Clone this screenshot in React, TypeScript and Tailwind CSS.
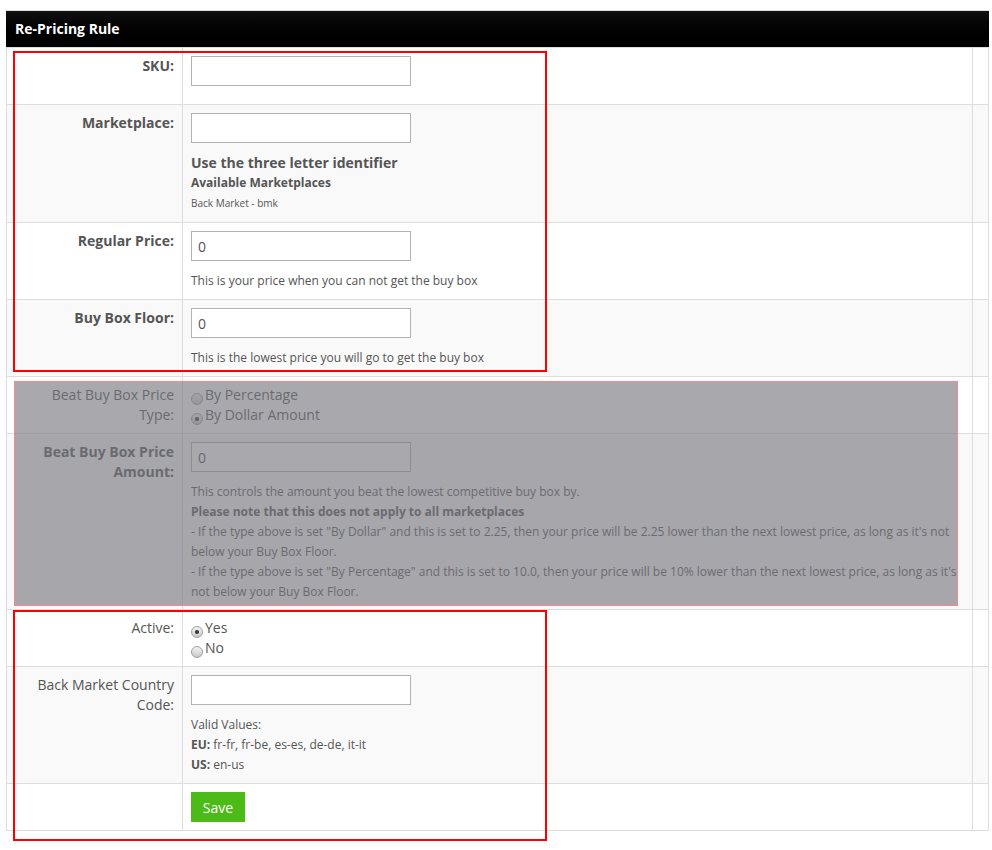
import React from "react";

interface RowProps {
  label?: React.ReactNode;
  strong?: boolean;
  striped?: boolean;
  children?: React.ReactNode;
}

const Row: React.FC<RowProps> = ({ label, strong = false, striped = false, children }) => (
  <div className={`flex border-t border-[#ddd] ${striped ? "bg-[#f9f9f9]" : "bg-white"}`}>
    <div
      className={`w-[176px] shrink-0 border-r border-[#ddd] py-2 pl-2 pr-2 text-right text-[14px] leading-5 text-[#555] ${
        strong ? "font-bold" : ""
      }`}
    >
      {label}
    </div>
    <div className="min-w-0 flex-1 border-r border-[#ddd] px-2 py-2">{children}</div>
    <div className="w-[15px] shrink-0" />
  </div>
);

const TextInput = ({ value = "", disabled = false }: { value?: string; disabled?: boolean }) => (
  <input
    type="text"
    readOnly
    disabled={disabled}
    value={value}
    className="mb-[10px] block h-[30px] w-[220px] border border-[#b3b3b3] bg-white px-[6px] text-[14px] text-[#555] outline-none"
  />
);

const Radio = ({ checked = false, label }: { checked?: boolean; label: string }) => (
  <div className="flex items-start text-[14px] leading-5 text-[#555]">
    <span className="mt-[8px] mr-[2px] flex h-[12px] w-[12px] shrink-0 items-center justify-center rounded-full border border-[#a0a0a0] bg-linear-to-b from-[#f2f2f2] to-[#c9c9c9]">
      {checked && <span className="h-[4px] w-[4px] rounded-full bg-[#333]" />}
    </span>
    {label}
  </div>
);

const Help = ({ children, bold = false }: { children: React.ReactNode; bold?: boolean }) => (
  <div className={`text-[12px] leading-5 text-[#555] ${bold ? "font-bold" : ""}`}>{children}</div>
);

export default function App() {
  return (
    <div className="min-h-[850px] bg-white font-['Open_Sans',sans-serif]">
      <div className="ml-[6px] w-[983px] pt-[10px]">
        <div className="border-t border-[#ddd]">
          <div className="h-[36px] bg-linear-to-b from-[#111] to-black pl-[9px] text-[14px] font-bold leading-[36px] text-white">
            Re-Pricing Rule
          </div>
        </div>

        <div className="border-b border-l border-r border-[#ddd]">
          {/* pricing fields */}
          <div className="relative">
            <Row label="SKU:" strong>
              <TextInput />
            </Row>
            <Row label="Marketplace:" strong striped>
              <TextInput />
              <div className="text-[14px] font-bold leading-5 text-[#555]">Use the three letter identifier</div>
              <Help bold>Available Marketplaces</Help>
              <div className="pb-px text-[10px] leading-5 text-[#555]">Back Market - bmk</div>
            </Row>
            <Row label="Regular Price:" strong>
              <TextInput value="0" />
              <Help>This is your price when you can not get the buy box</Help>
            </Row>
            <Row label="Buy Box Floor:" strong striped>
              <TextInput value="0" />
              <Help>This is the lowest price you will go to get the buy box</Help>
            </Row>
            <div className="pointer-events-none absolute top-[4px] bottom-[4px] left-[6px] w-[534px] border-2 border-[#ff0000]" />
          </div>

          {/* beat buy box settings, disabled */}
          <div className="relative">
            <Row label="Beat Buy Box Price Type:">
              <Radio label="By Percentage" />
              <Radio checked label="By Dollar Amount" />
            </Row>
            <Row label="Beat Buy Box Price Amount:" strong striped>
              <TextInput value="0" disabled />
              <div className="-mb-px">
                <Help>This controls the amount you beat the lowest competitive buy box by.</Help>
                <Help bold>Please note that this does not apply to all marketplaces</Help>
                <Help>
                  - If the type above is set "By Dollar" and this is set to 2.25, then your price will be 2.25 lower
                  than the next lowest price, as long as it's not below your Buy Box Floor.
                </Help>
                <Help>
                  - If the type above is set "By Percentage" and this is set to 10.0, then your price will be 10%
                  lower than the next lowest price, as long as it's not below your Buy Box Floor.
                </Help>
              </div>
            </Row>
            <div className="absolute top-[5px] bottom-[3px] left-[7px] w-[944px] border border-[#f28b8b] bg-[rgba(119,119,127,0.64)]" />
          </div>

          {/* status + country */}
          <div className="relative">
            <Row label="Active:">
              <Radio checked label="Yes" />
              <Radio label="No" />
            </Row>
            <Row label="Back Market Country Code:" striped>
              <TextInput />
              <Help>Valid Values:</Help>
              <Help>
                <b>EU:</b> fr-fr, fr-be, es-es, de-de, it-it
              </Help>
              <Help>
                <b>US:</b> en-us
              </Help>
            </Row>
            <Row>
              <button className="block h-[30px] w-[54px] bg-[#4cbb17] text-[14px] text-white">Save</button>
            </Row>
            <div className="pointer-events-none absolute top-[1px] bottom-[-11px] left-[6px] w-[534px] border-2 border-[#ff0000]" />
          </div>
        </div>
      </div>
    </div>
  );
}
